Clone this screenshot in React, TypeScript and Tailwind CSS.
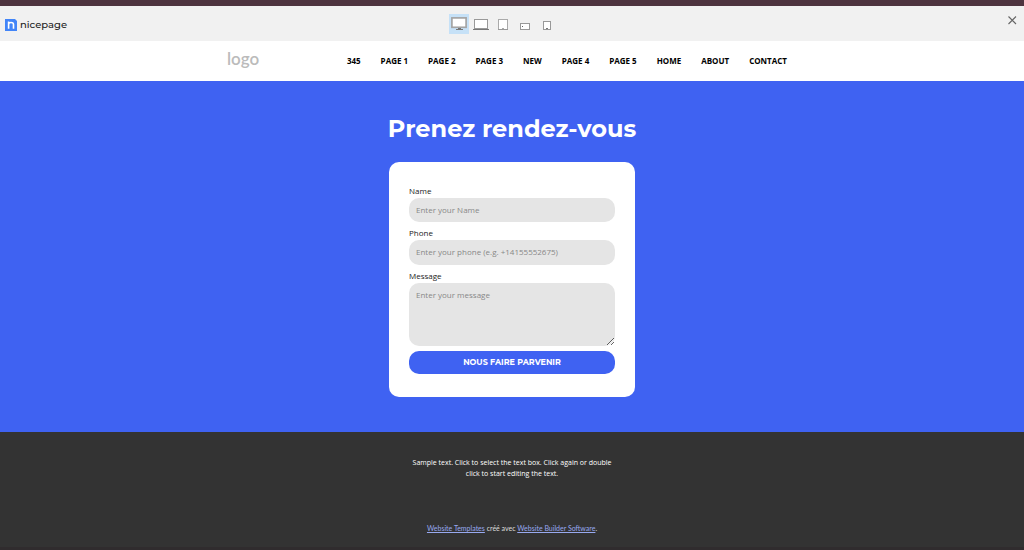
import React from "react";

const links = ["345", "PAGE 1", "PAGE 2", "PAGE 3", "NEW", "PAGE 4", "PAGE 5", "HOME", "ABOUT", "CONTACT"];

function DeviceButton({ label, active, children }: { label: string; active?: boolean; children: React.ReactNode }) {
  return (
    <button type="button" aria-label={label} className={active ? "h-5 w-5 bg-[#c6e1f7]" : "h-5 w-5"}>
      <svg viewBox="0 0 20 20" className="h-5 w-5" fill="none" shapeRendering="crispEdges">
        {children}
      </svg>
    </button>
  );
}

function Toolbar() {
  return (
    <div className="grid h-[35px] grid-cols-3 items-center bg-[#f1f1f1]">
      <a href="#" className="flex items-center gap-[3px] pt-[3px] pl-[5px]">
        <svg viewBox="0 0 12 12" className="h-3 w-3">
          <path d="M0 0H10L12 2V12H0Z" fill="#4285f8" />
          <path d="M3.6 9.7V2.6M3.6 5.6C3.6 2.7 8.5 2.7 8.5 5.6V9.7" stroke="white" strokeWidth="1.6" fill="none" />
        </svg>
        <span className="font-['Montserrat','Inter',sans-serif] text-[10px] leading-4 font-medium text-[#222]">nicepage</span>
      </a>
      <div className="flex items-center justify-center gap-[2px] pr-[18px]">
        <DeviceButton label="Desktop" active>
          <rect x="2.9" y="3.9" width="14.2" height="9.4" fill="white" stroke="#a5a5a5" strokeWidth="1.7" shapeRendering="auto" />
          <path d="M9 14.5H12M7 15.5H14" stroke="#777" />
        </DeviceButton>
        <DeviceButton label="Laptop">
          <rect x="3.5" y="5.5" width="13" height="9" fill="white" stroke="#999" />
          <path d="M2 15.5H18" stroke="#777" />
        </DeviceButton>
        <DeviceButton label="Tablet">
          <rect x="5.5" y="5.5" width="9" height="10" fill="white" stroke="#aaa" />
          <path d="M5 15.5H15" stroke="#999" />
          <path d="M9 14.5H11" stroke="#aaa" />
        </DeviceButton>
        <DeviceButton label="Phone landscape">
          <rect x="5.5" y="9.5" width="9" height="6" fill="white" stroke="#999" />
          <path d="M7 12.5H8" stroke="#666" />
        </DeviceButton>
        <DeviceButton label="Phone">
          <rect x="6.5" y="7.5" width="7" height="8" fill="white" stroke="#999" />
          <path d="M9 14.5H11" stroke="#777" />
        </DeviceButton>
      </div>
      <button type="button" aria-label="Close" className="mr-[7px] mb-[7px] justify-self-end">
        <svg viewBox="0 0 10 10" className="h-[10px] w-[10px]">
          <path d="M1.5 1.5L9 9M9 1.5L1.5 9" stroke="#666" strokeWidth="1.1" />
        </svg>
      </button>
    </div>
  );
}

const labelStyle = "block text-[8px] leading-[14px] text-[#222]";
const fieldStyle = "block w-full rounded-[10px] bg-[#e5e5e5] px-[7px] text-[8px] text-[#222] placeholder:text-[#888]";

export default function App() {
  return (
    <div className="flex min-h-screen flex-col bg-[#333] font-['Open_Sans',sans-serif]">
      <div className="h-[6px] bg-[#4e343f]" />
      <Toolbar />
      <header className="bg-white">
        <div className="mx-auto flex h-10 max-w-[570px] items-center justify-between pr-[10px]">
          <a href="#" className="pb-1 font-['Lato',sans-serif] text-[17px] leading-6 font-semibold text-[#bbb]">logo</a>
          <nav className="flex gap-5 text-[8px] leading-3 font-bold text-black">
            {links.map((link) => (
              <a href="#" key={link}>{link}</a>
            ))}
          </nav>
        </div>
      </header>
      <main className="flex flex-col items-center bg-[#3f62f2] pt-8 pb-[35px]">
        <h1 className="font-['Montserrat','Inter',sans-serif] text-[24px] leading-8 font-bold text-white">Prenez rendez-vous</h1>
        <form className="mt-[17px] w-[246px] rounded-[10px] bg-white px-5 pt-[22px] pb-[23px]" onSubmit={(e) => e.preventDefault()}>
          <label htmlFor="name" className={labelStyle}>Name</label>
          <input id="name" placeholder="Enter your Name" className={`${fieldStyle} h-6 pb-px`} />
          <label htmlFor="phone" className={`${labelStyle} mt-1`}>Phone</label>
          <input id="phone" type="tel" placeholder="Enter your phone (e.g. +14155552675)" className={`${fieldStyle} h-[25px] pb-[2px]`} />
          <label htmlFor="message" className={`${labelStyle} mt-1`}>Message</label>
          <textarea id="message" placeholder="Enter your message" className={`${fieldStyle} h-[63px] resize py-[6px] leading-3`} />
          <button type="submit" className="mt-[5px] block h-[23px] w-full rounded-[10px] bg-[#3f62f2] pb-px font-['Montserrat','Inter',sans-serif] text-[8px] font-bold text-white">
            NOUS FAIRE PARVENIR
          </button>
        </form>
      </main>
      <footer className="flex grow flex-col items-center border-b-[3px] border-[#302c2e] pt-[25px] text-center text-[7px] leading-[11px] text-white">
        <p className="w-[206px]">Sample text. Click to select the text box. Click again or double click to start editing the text.</p>
        <p className="mt-11 font-['Lato',sans-serif] text-[#ddd]">
          <a href="#" className="text-[#98a9f0] underline">Website Templates</a> créé avec{" "}
          <a href="#" className="text-[#98a9f0] underline">Website Builder Software</a>.
        </p>
      </footer>
    </div>
  );
}
